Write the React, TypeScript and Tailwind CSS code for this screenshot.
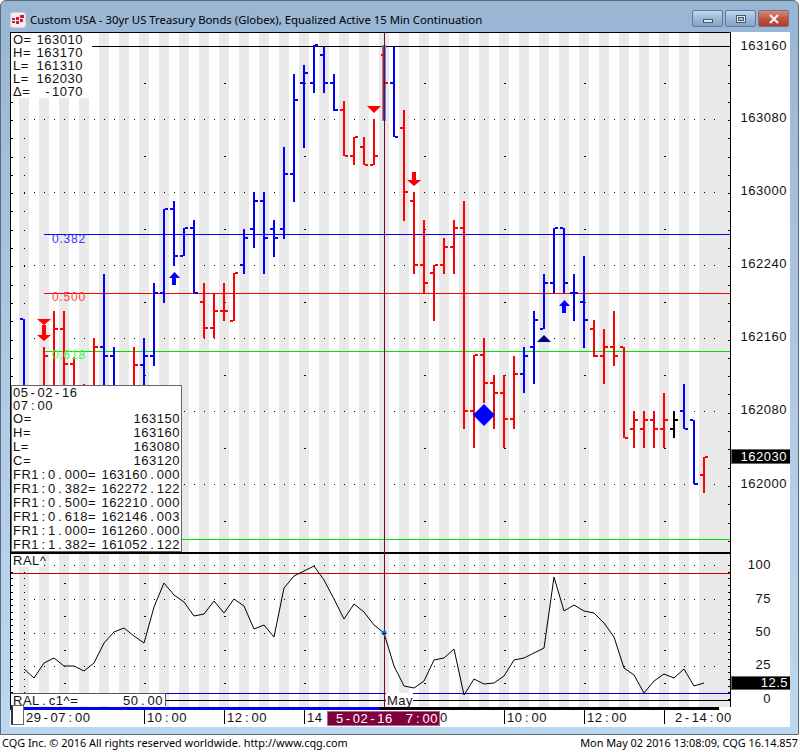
import React from "react";

type Bar = [number, number, number, number | null, number | null, string];
const B = "#0000ff";
const R = "#ff0000";
const K = "#000000";

const bars: Bar[] = [
  [24, 319, 386, 319, null, B],
  [44, 347, 386, null, 356, R],
  [54, 311, 386, null, 329, R],
  [64, 311, 386, 329, 364, R],
  [74, 357, 386, 364, null, R],
  [84, 384, 386, null, null, R],
  [94, 338, 386, null, 347, R],
  [104, 274, 386, 347, 356, B],
  [114, 347, 386, 356, null, B],
  [134, 347, 386, null, 365, R],
  [144, 338, 386, 365, 356, B],
  [154, 283, 366, 356, 293, B],
  [164, 209, 303, 293, 209, B],
  [174, 201, 266, 209, 256, B],
  [184, 228, 256, 256, 228, B],
  [194, 220, 293, 228, 293, B],
  [204, 283, 338, 302, 328, R],
  [214, 293, 338, 328, 311, R],
  [224, 283, 321, 311, 311, R],
  [234, 273, 321, 321, 273, R],
  [244, 229, 274, 265, 238, B],
  [254, 192, 248, 229, 201, B],
  [264, 192, 274, 201, 238, B],
  [274, 220, 257, 229, 238, B],
  [284, 147, 239, 229, 174, B],
  [294, 74, 202, 174, 100, B],
  [304, 65, 148, 83, 73, B],
  [314, 45, 93, 83, 45, B],
  [324, 47, 93, 55, 83, B],
  [334, 74, 111, 83, 110, B],
  [344, 101, 156, 110, 156, R],
  [354, 137, 165, 156, 137, R],
  [364, 137, 165, 147, 165, R],
  [374, 119, 165, 165, 156, R],
  [394, 47, 137, 83, 137, B],
  [404, 110, 221, 128, 192, R],
  [414, 192, 274, 201, 265, R],
  [424, 220, 293, 265, 283, R],
  [434, 265, 321, 273, 265, R],
  [444, 238, 274, 265, 247, R],
  [454, 220, 274, 247, 228, R],
  [464, 201, 429, 228, 411, R],
  [474, 355, 448, 411, 355, R],
  [484, 338, 403, 355, 383, R],
  [494, 375, 429, 383, 393, R],
  [504, 375, 448, 393, 419, R],
  [514, 356, 429, 419, 374, R],
  [524, 347, 393, 374, 356, B],
  [534, 311, 384, 347, 320, B],
  [544, 274, 329, 329, 283, B],
  [554, 228, 293, 283, 228, B],
  [564, 228, 293, 228, 283, B],
  [574, 274, 321, 293, 293, B],
  [584, 256, 348, 302, 320, B],
  [594, 320, 357, 329, 356, R],
  [604, 329, 384, 356, 347, R],
  [614, 311, 366, 347, 356, R],
  [624, 347, 438, 347, 438, R],
  [634, 411, 448, 429, 420, R],
  [644, 411, 448, 429, 420, R],
  [654, 411, 448, 420, 429, R],
  [664, 393, 448, 429, 420, R],
  [674, 411, 438, 429, 420, K],
  [684, 384, 429, 411, 429, B],
  [694, 420, 484, 420, 484, B],
  [704, 457, 493, 475, 457, R],
];

const osc = [669, 678, 663, 658, 666, 666, 671, 663, 643, 632, 628, 636, 643, 607, 583, 595, 602, 616, 614, 601, 613, 599, 606, 629, 625, 637, 588, 576, 571, 566, 580, 599, 619, 604, 612, 625, 633, 666, 686, 688, 681, 660, 658, 649, 695, 679, 684, 683, 676, 660, 658, 653, 648, 577, 611, 605, 611, 613, 623, 637, 668, 675, 693, 681, 674, 678, 669, 686, 683];

const stripes = Array.from({ length: 35 }, (_, i) => 19 + i * 20);
const rowX = Array.from({ length: 70 }, (_, i) => 24 + i * 10);
const hourX = [144, 224, 304, 424, 504, 584, 664];
const minor = Array.from({ length: 27 }, (_, i) => 65 + i * 18.3).map(Math.round);
const priceRows = [119, 192, 265, 338, 411, 484];
const midRows = [83, 156, 229, 302, 375, 448, 521];
const oscMinor = Array.from({ length: 21 }, (_, i) => 565 + i * 6.7).map(Math.round);
const oscRows = [565, 599, 633, 666];
const oscMid = [583, 616, 650, 683];

const face = "[font-family:'Liberation_Sans',Arial,sans-serif]";
const mono = `${face} text-[13px] tracking-[0.5px] text-[#111]`;

const Wide = ({ t }: { t: string }) => (
  <>
    {[...t].map((c, i) =>
      /[-:.]/.test(c) ? (
        <span key={i} className="inline-block w-[9px] text-center">
          {c}
        </span>
      ) : (
        <span key={i}>{c}</span>
      )
    )}
  </>
);

const Stripes = ({ y, h }: { y: number; h: number }) => (
  <>
    {stripes.map((x) => (
      <rect key={x} x={x} y={y} width={x === 699 ? 31 : 10} height={h} fill="#e9e9e9" />
    ))}
  </>
);

const Dot = ({ x, y, w = 1 }: { x: number; y: number; w?: number }) => <rect x={x} y={y} width={w} height={1} fill="#000" />;

const PriceChart = () => (
  <svg viewBox="10 32 780 520" width={780} height={520} shapeRendering="crispEdges" className="block">
    <Stripes y={33} h={519} />
    {priceRows.map((y) => rowX.map((x) => <Dot key={`${x}-${y}`} x={x} y={y} />))}
    {midRows.map((y) => hourX.map((x) => <Dot key={`${x}-${y}`} x={x} y={y} w={2} />))}
    {minor.filter((y) => y > 130).map((y) => <Dot key={y} x={24} y={y} />)}
    <rect x={92} y={46} width={638} height={1} fill="#000" />
    <rect x={44} y={234} width={686} height={1} fill="#0000ff" />
    <rect x={44} y={293} width={686} height={1} fill="#ff0000" />
    <rect x={44} y={351} width={686} height={1} fill="#00e000" />
    <rect x={181} y={539} width={549} height={1} fill="#00e000" />
    {bars.map(([x, t, l, o, c, col]) => (
      <g key={x} fill={col}>
        <rect x={x - 1} y={t} width={2} height={l - t} />
        {o !== null && <rect x={x - 4} y={o - 1} width={3} height={2} />}
        {c !== null && <rect x={x + 1} y={c - 1} width={3} height={2} />}
      </g>
    ))}
    <rect x={382} y={45} width={4} height={76} fill="#3f9fef" />
    <rect x={383} y={46} width={2} height={74} fill="#ff0000" />
    <rect x={381} y={54} width={2} height={2} fill="#ff0000" />
    <rect x={385} y={82} width={3} height={2} fill="#ff0000" />
    <rect x={384} y={32} width={1} height={520} fill="#800040" shapeRendering="crispEdges" />
    <g shapeRendering="auto">
      <polygon points="367,106 381,106 374,113" fill="#ff0000" />
      <polygon points="37,319 51,319 44,325" fill="#ff0000" />
      <rect x={42} y={325} width={4} height={10} fill="#ff0000" />
      <polygon points="37,335 51,335 44,341" fill="#ff0000" />
      <rect x={412} y={172} width={4} height={8} fill="#ff0000" />
      <polygon points="407,180 421,180 414,186" fill="#ff0000" />
      <rect x={172} y={277} width={4} height={8} fill="#0000ff" />
      <polygon points="169,278 180,278 174.5,272" fill="#0000ff" />
      <rect x={562} y={305} width={4} height={8} fill="#0000ff" />
      <polygon points="559,306 570,306 564.5,300" fill="#0000ff" />
      <polygon points="537,342 551,342 544,335" fill="#000080" />
      <polygon points="484,404 495,415 484,426 473,415" fill="#0000ff" />
    </g>
    <rect x={730} y={32} width={1} height={520} fill="#000" />
    <rect x={10} y={32} width={720} height={1} fill="#000" />
    <rect x={10} y={32} width={1} height={520} fill="#000" />
    {minor.map((y) => (
      <g key={y}>
        <rect x={728} y={y} width={2} height={1} fill="#000" />
        <rect x={11} y={y} width={2} height={1} fill="#000" />
      </g>
    ))}
    <g className={mono} fill="#111" textAnchor="end">
      <text x={787} y={50}>163160</text>
      <text x={787} y={122}>163080</text>
      <text x={787} y={195}>163000</text>
      <text x={787} y={268}>162240</text>
      <text x={787} y={341}>162160</text>
      <text x={787} y={414}>162080</text>
      <text x={787} y={488}>162000</text>
    </g>
    <rect x={731} y={449} width={59} height={14} fill="#000" stroke="#666" />
    <text x={787} y={461} textAnchor="end" fill="#fff" className={mono}>162030</text>
  </svg>
);

const pts = osc.map((y, i) => `${24 + i * 10},${y}`).join(" ");

const OscChart = () => (
  <svg viewBox="10 552 780 155" width={780} height={155} shapeRendering="crispEdges" className="block">
    <Stripes y={554} h={153} />
    {oscRows.map((y) => rowX.map((x) => <Dot key={`${x}-${y}`} x={x} y={y} />))}
    {oscMid.map((y) => [64, ...hourX].map((x) => <Dot key={`${x}-${y}`} x={x} y={y} w={2} />))}
    {oscMinor.filter((y) => y > 570).map((y) => <Dot key={y} x={24} y={y} />)}
    <rect x={10} y={552} width={720} height={2} fill="#000" />
    <rect x={11} y={573} width={719} height={1} fill="#cc0000" />
    <rect x={11} y={693} width={719} height={1} fill="#0000dd" />
    <rect x={166} y={700} width={564} height={1} fill="#000" />
    <polyline points={pts} fill="none" stroke="#000" strokeWidth={1} shapeRendering="auto" />
    <rect x={384} y={552} width={1} height={155} fill="#800040" />
    <circle cx={384} cy={633} r={2.5} fill="#0a7ae0" shapeRendering="auto" />
    <rect x={383} y={633} width={3} height={1} fill="#000" />
    <rect x={10} y={552} width={1} height={155} fill="#000" />
    <rect x={730} y={552} width={1} height={155} fill="#000" />
    {oscMinor.map((y) => (
      <g key={y}>
        <rect x={728} y={y} width={2} height={1} fill="#000" />
        <rect x={11} y={y} width={2} height={1} fill="#000" />
      </g>
    ))}
    <g className={mono} fill="#111" textAnchor="end">
      <text x={771} y={569}>100</text>
      <text x={771} y={603}>75</text>
      <text x={771} y={636}>50</text>
      <text x={771} y={669}>25</text>
      <text x={771} y={703}>0</text>
    </g>
    <rect x={731} y={676} width={59} height={13} fill="#000" stroke="#666" />
    <text x={788} y={687} textAnchor="end" fill="#fff" className={mono}>12.5</text>
  </svg>
);

const Row = ({ a, b, tall }: { a: string; b: string; tall?: boolean }) => (
  <div className={`flex justify-between overflow-hidden whitespace-pre ${tall ? "h-[14px] leading-[14px]" : "h-[13px] leading-[13px]"}`}>
    <span><Wide t={a} /></span>
    <span><Wide t={b} /></span>
  </div>
);

const Header = () => (
  <div className={`absolute left-[1px] top-[1px] w-[78px] h-[65px] bg-white pl-[2px] pr-[6px] ${mono}`}>
    {[["O=", "163010"], ["H=", "163170"], ["L=", "161310"], ["L=", "162030"], ["Δ=", "-1070"]].map(([a, b], i) => (
      <div key={i} className="flex justify-between overflow-hidden h-[13px] leading-[13px]">
        <span>{a}</span>
        <span><Wide t={b} /></span>
      </div>
    ))}
  </div>
);

const Info = () => (
  <div className={`absolute left-[1px] top-[353px] w-[171px] h-[167px] bg-white border border-[#666] pl-[1px] pr-[1px] ${mono}`}>
    <Row a="05-02-16" b="" />
    <Row a="07:00" b="" />
    <Row a="O=" b="163150" tall />
    <Row a="H=" b="163160" tall />
    <Row a="L=" b="163080" tall />
    <Row a="C=" b="163120" tall />
    <Row a="FR1:0.000=" b="163160.000" tall />
    <Row a="FR1:0.382=" b="162272.122" tall />
    <Row a="FR1:0.500=" b="162210.000" tall />
    <Row a="FR1:0.618=" b="162146.003" tall />
    <Row a="FR1:1.000=" b="161260.000" tall />
    <Row a="FR1:1.382=" b="161052.122" tall />
  </div>
);

const Fib = ({ t, top, c }: { t: string; top: number; c: string }) => (
  <div className={`absolute left-[42px] h-[13px] leading-[13px] text-[12px] tracking-[0.8px] ${face} ${c}`} style={{ top }}>
    {t}
  </div>
);

const Tick = ({ left }: { left: number }) => <div className="absolute top-[3px] h-[14px] w-px bg-black" style={{ left }} />;

const TimeLabel = ({ left, t }: { left: number; t: string }) => (
  <div className={`absolute top-[4px] h-[14px] leading-[14px] ${mono}`} style={{ left }}>
    <Wide t={t} />
  </div>
);

const TimeAxis = () => (
  <div className="relative h-[20px] bg-white">
    <div className="flex h-[3px]">
      <div className="w-[370px] bg-[#0000ff]" />
      <div className="w-[339px] bg-black" />
    </div>
    {[134, 214, 294, 494, 574, 654].map((l) => <Tick key={l} left={l} />)}
    <TimeLabel left={16} t="29-07:00" />
    <TimeLabel left={137} t="10:00" />
    <TimeLabel left={217} t="12:00" />
    <TimeLabel left={297} t="14" />
    <TimeLabel left={430} t="0" />
    <TimeLabel left={497} t="10:00" />
    <TimeLabel left={577} t="12:00" />
    <TimeLabel left={665} t="2-14:00" />
    <div className={`absolute left-[317px] top-[4px] w-[113px] h-[15px] bg-[#800040] border border-[#a8688a] flex justify-between px-[8px] leading-[14px] ${face} text-[13px] tracking-[0.5px] text-white`}>
      <span><Wide t="5-02-16" /></span>
      <span className="-mr-[7px]"><Wide t="7:00" /></span>
    </div>
    <div className="absolute left-[1px] -top-[2px] w-[13px] h-[20px] bg-white border border-[#666] border-l-2 border-l-[#333]" />
  </div>
);

const TitleButton = ({ children, red }: { children: React.ReactNode; red?: boolean }) => (
  <div className={`w-[31px] h-[17px] rounded-[2px] border border-[#5f7a96] flex items-center justify-center ${red ? "bg-linear-to-b from-[#d98a7c] via-[#c4533f] to-[#b03a2c]" : "bg-linear-to-b from-[#c3d6e8] via-[#9db9d6] to-[#86a6c8]"}`}>
    {children}
  </div>
);

export default function App() {
  return (
    <div className="w-[800px] h-[752px] bg-white overflow-hidden flex flex-col">
      <div className="w-[799px] h-[735px] rounded-t-[6px] border border-[#5c6b78] bg-linear-to-b from-[#98b5d3] via-[#aec9e4] to-[#bcd8f0] flex flex-col">
        <div className="h-[31px] flex items-center pl-[9px] pr-[9px] pt-[6px]">
          <svg width={16} height={16} viewBox="0 0 16 16" className="shrink-0">
            <rect x={0.5} y={0.5} width={15} height={15} rx={2} fill="#f6eeee" stroke="#d8d0d4" />
            <rect x={2} y={6} width={3} height={2} fill="#c8203c" />
            <rect x={2} y={9} width={3} height={2} fill="#c8203c" />
            <rect x={6} y={5} width={3} height={3} fill="#c8203c" />
            <rect x={6} y={9} width={3} height={3} fill="#c8203c" />
            <rect x={10} y={3} width={4} height={3} fill="#c8203c" />
            <rect x={10} y={7} width={3} height={3} fill="#c8203c" />
          </svg>
          <div className="ml-[4px] flex-1 text-[11.35px] text-black whitespace-nowrap [font-family:'Noto_Sans',sans-serif]">
            Custom USA - 30yr US Treasury Bonds (Globex), Equalized Active 15 Min Continuation
          </div>
          <div className="flex gap-[2px] -translate-y-[1px]">
            <TitleButton>
              <div className="w-[10px] h-[4px] bg-[#dfe7ef] border border-[#4a5a6a] mt-[4px]" />
            </TitleButton>
            <TitleButton>
              <div className="w-[10px] h-[8px] bg-[#dfe7ef] border border-[#4a5a6a]">
                <div className="mx-auto mt-[1px] h-[4px] w-[6px] border border-[#4a5a6a] bg-[#a9c1d9]" />
              </div>
            </TitleButton>
            <TitleButton red>
              <svg width={12} height={10} viewBox="0 0 12 10">
                <path d="M2 1 L10 9 M10 1 L2 9" stroke="#f4f0ee" strokeWidth={2.4} />
              </svg>
            </TitleButton>
          </div>
        </div>
        <div className="ml-[9px] w-[780px] h-[695px] bg-white flex flex-col">
          <div className="relative h-[520px]">
            <PriceChart />
            <Header />
            <Fib t="0.382" top={201} c="text-[#3333ff]" />
            <Fib t="0.500" top={259} c="text-[#ff4040]" />
            <Fib t="0.618" top={317} c="text-[#44ff44]" />
            <Info />
          </div>
          <div className="relative h-[155px]">
            <OscChart />
            <div className={`absolute left-[1px] top-[2px] w-[32px] h-[13px] bg-white pl-[2px] leading-[13px] ${mono}`}>RAL^</div>
            <div className={`absolute left-[1px] top-[141px] w-[155px] h-[13px] bg-white border-t border-r border-[#555] flex justify-between px-[2px] leading-[13px] ${mono}`}>
              <span><Wide t="RAL.c1^=" /></span>
              <span><Wide t="50.00" /></span>
            </div>
            <div className={`absolute left-[376px] top-[141px] h-[13px] bg-white pl-[1px] leading-[15px] ${mono}`}>May</div>
          </div>
          <TimeAxis />
        </div>
      </div>
      <div className="w-[800px] h-[17px] flex justify-between items-center px-[2px] text-[10.9px] text-black whitespace-nowrap [font-family:'Noto_Sans',sans-serif]">
        <span>CQG Inc. © 2016 All rights reserved worldwide. http://www.cqg.com</span>
        <span>Mon May 02 2016 13:08:09, CQG 16.14.857</span>
      </div>
    </div>
  );
}
